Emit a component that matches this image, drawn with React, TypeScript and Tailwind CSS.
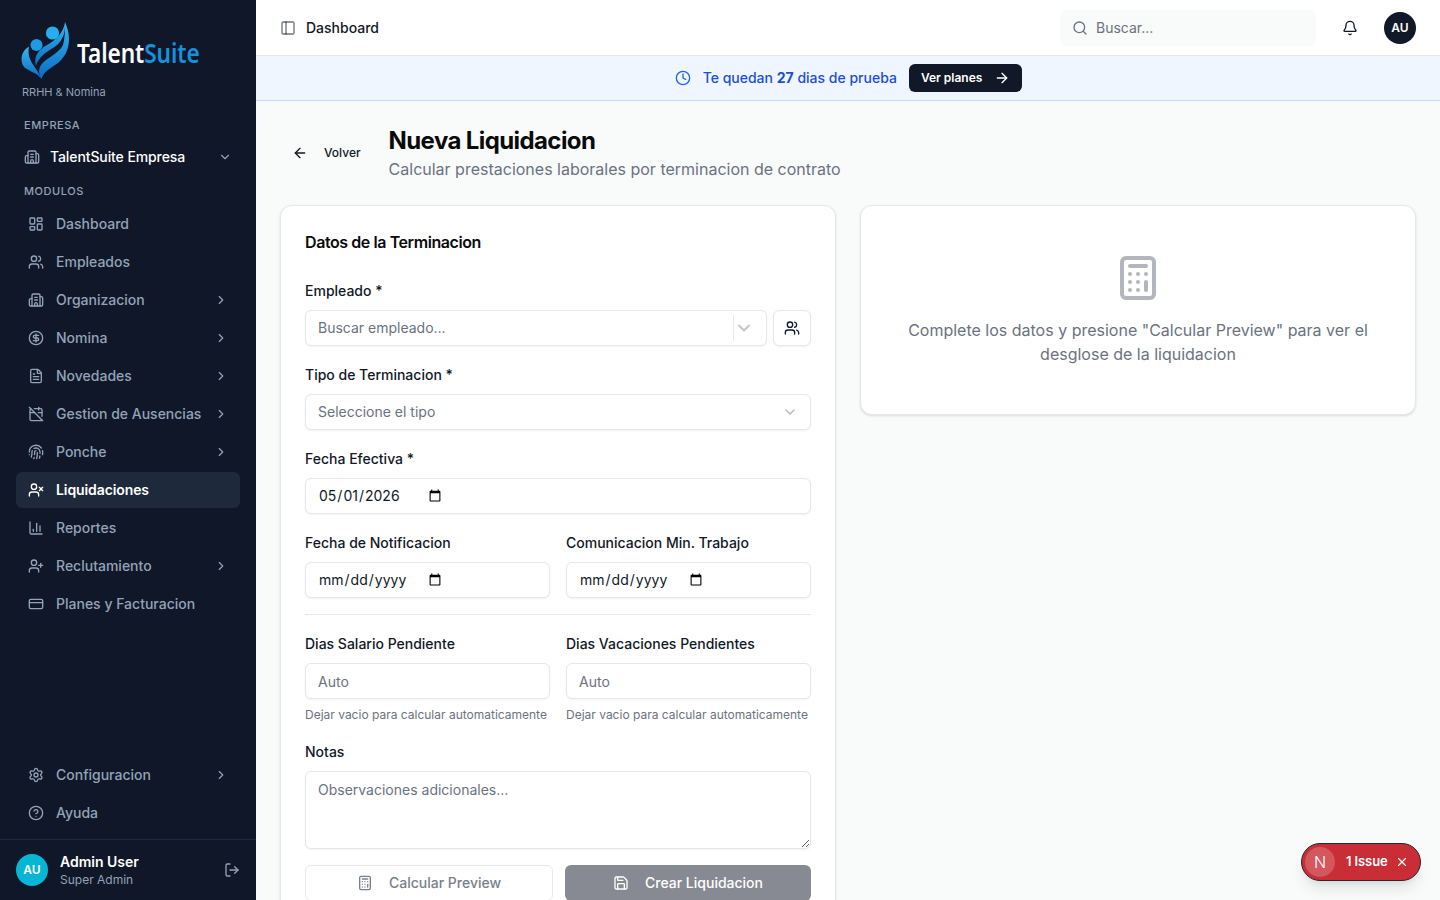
import React from "react";
import {
  Building2, ChevronDown, ChevronRight, LayoutDashboard, Users, CircleDollarSign, FileText, CalendarOff,
  Fingerprint, UserX, ChartColumn, UserPlus, CreditCard, Settings, CircleHelp, LogOut, PanelLeft, Clock,
  ArrowRight, ArrowLeft, Search, Bell, Calculator, Save, X,
} from "lucide-react";

const nav = [
  { label: "Dashboard", icon: LayoutDashboard },
  { label: "Empleados", icon: Users },
  { label: "Organizacion", icon: Building2, more: true },
  { label: "Nomina", icon: CircleDollarSign, more: true },
  { label: "Novedades", icon: FileText, more: true },
  { label: "Gestion de Ausencias", icon: CalendarOff, more: true },
  { label: "Ponche", icon: Fingerprint, more: true },
  { label: "Liquidaciones", icon: UserX, active: true },
  { label: "Reportes", icon: ChartColumn },
  { label: "Reclutamiento", icon: UserPlus, more: true },
  { label: "Planes y Facturacion", icon: CreditCard },
];

function NavItem({ label, icon: Icon, more, active }: { label: string; icon: any; more?: boolean; active?: boolean }) {
  return (
    <div className={`flex h-9 items-center rounded-md pl-3 pr-3 text-sm ${active ? "bg-[#1e293b] font-semibold tracking-[-0.1px] text-white" : "font-medium text-[#94a3b8]"}`}>
      <Icon className="mr-3 size-4 shrink-0" strokeWidth={2} />
      <span className="flex-1 whitespace-nowrap">{label}</span>
      {more && <ChevronRight className="size-[14px] shrink-0" />}
    </div>
  );
}

function Logo() {
  return (
    <svg viewBox="20 20 52 60" className="h-[60px] w-[52px] shrink-0">
      <defs>
        <linearGradient id="lg" x1="0" y1="0" x2="0" y2="1">
          <stop offset="0" stopColor="#38b6f1" />
          <stop offset="1" stopColor="#0a6cc2" />
        </linearGradient>
      </defs>
      <circle cx="52.5" cy="33" r="6.6" fill="#27aef0" />
      <circle cx="36.5" cy="45" r="6" fill="#1c9be6" />
      <path d="M65 22C64 32 56 40 47 45C40 49 33 55 36 66C38 58 46 52 53 48C60 44 66 36 65 22Z" fill="url(#lg)" />
      <path d="M65 22C72 38 70 53 58 63C51 68 44 71 41.500 79C37 72 39 65 46 60C53 55 60 51 63 45C65 38 65 30 65 22Z" fill="url(#lg)" />
      <path d="M29 46.500C21 51 19 62 25 68C31 72 37 73 41 78.500C38 70 33 66 30.500 60C28.500 55 28 51 29 46.500Z" fill="url(#lg)" />
    </svg>
  );
}

function Sidebar() {
  return (
    <aside className="flex h-full w-64 shrink-0 flex-col bg-[#0f1728]">
      <div className="pl-5 pt-5">
        <div className="flex h-[60px] items-center">
          <Logo />
          <span className="ml-[5px] mt-[6px] inline-block origin-left scale-x-[0.84] whitespace-nowrap font-['Noto_Sans',sans-serif] text-[27px] font-semibold tracking-[-0.1px] text-white">
            Talent<span className="text-[#1591dd]">Suite</span>
          </span>
        </div>
        <div className="mt-[4px] pl-[2px] text-[11px] leading-4 text-[#94a3b8]">RRHH &amp; Nomina</div>
      </div>
      <div className="mt-[17px] px-6 text-[11px] font-medium leading-4 tracking-[0.55px] text-[#94a3b8]">EMPRESA</div>
      <div className="mt-[6px] flex h-9 items-center pl-6 pr-6 text-sm font-medium tracking-[-0.1px] text-white">
        <Building2 className="mr-[10px] size-4 text-[#94a3b8]" />
        <span className="flex-1">TalentSuite Empresa</span>
        <ChevronDown className="size-[14px] text-[#94a3b8]" />
      </div>
      <div className="mt-[8px] px-6 text-[11px] font-medium leading-4 tracking-[0.55px] text-[#94a3b8]">MODULOS</div>
      <nav className="mt-[7px] flex flex-col gap-[2px] px-4">
        {nav.map((n) => (
          <NavItem key={n.label} {...n} />
        ))}
      </nav>
      <div className="mt-auto flex flex-col gap-[2px] px-4 pb-2">
        <NavItem label="Configuracion" icon={Settings} more />
        <NavItem label="Ayuda" icon={CircleHelp} />
      </div>
      <div className="flex h-[61px] items-center border-t border-[#1e293b] pl-4 pr-4">
        <div className="flex size-8 items-center justify-center rounded-full bg-[#06b6d4] text-xs font-semibold text-white">AU</div>
        <div className="ml-3 flex-1">
          <div className="text-sm font-semibold leading-[18px] text-white">Admin User</div>
          <div className="mt-[1px] text-xs leading-4 text-[#94a3b8]">Super Admin</div>
        </div>
        <LogOut className="size-4 text-[#94a3b8]" />
      </div>
    </aside>
  );
}

function Header() {
  return (
    <header className="flex h-14 shrink-0 items-center border-b border-[#e5e7eb] bg-white px-6">
      <PanelLeft className="size-4 text-[#111827]/60" />
      <span className="ml-[10px] flex-1 text-sm font-medium text-[#111827]">Dashboard</span>
      <div className="flex h-9 w-64 items-center rounded-md bg-[#f9fafa] pl-3 text-sm text-[#6b7280]">
        <Search className="mr-2 size-4" />
        <span>Buscar...</span>
      </div>
      <Bell className="ml-[26px] size-4 text-[#0f172a]" />
      <div className="ml-[26px] flex size-8 items-center justify-center rounded-full bg-[#111827] text-xs font-semibold text-white">AU</div>
    </header>
  );
}

function Banner() {
  return (
    <div className="flex h-[45px] shrink-0 items-center justify-center border-b border-[#bfdbfe] bg-[#eff6ff] pl-[1px]">
      <Clock className="mr-3 size-4 text-[#2563eb]" />
      <span className="text-sm font-medium text-[#1d4ed8]">
        Te quedan <b className="font-bold">27</b> dias de prueba
      </span>
      <div className="ml-3 flex h-7 items-center rounded-md bg-[#111827] px-3 text-xs font-semibold text-white">
        Ver planes
        <ArrowRight className="ml-3 size-4" />
      </div>
    </div>
  );
}

const inputCls =
  "flex h-9 w-full rounded-md border border-[#e5e7eb] bg-white px-3 text-sm text-[#111827] shadow-xs outline-none placeholder:text-[#6b7280]";

function Field({ label, children }: { label: string; children: React.ReactNode }) {
  return (
    <div>
      <label className="mb-[9px] block h-5 text-sm font-medium leading-5 text-[#111827]">{label}</label>
      {children}
    </div>
  );
}

function FormCard() {
  return (
    <section className="rounded-xl border border-[#e5e7eb] bg-white px-6 pb-6 pt-6 shadow-sm">
      <h2 className="text-base font-semibold leading-6 tracking-[-0.42px] text-[#0a0a0a]">Datos de la Terminacion</h2>
      <div className="mt-[27px] flex flex-col gap-[19px]">
        <Field label="Empleado *">
          <div className="flex gap-[6px]">
            <div className="flex h-9 flex-1 items-center rounded-md border border-[#e5e7eb] bg-white pl-3 pr-3 text-sm text-[#6b7280] shadow-xs">
              <span className="flex-1">Buscar empleado...</span>
              <span className="h-[26px] w-px bg-[#e5e7eb]" />
              <ChevronDown className="size-5 text-[#c4c7cc]" strokeWidth={2.5} />
            </div>
            <button className="flex h-9 w-[38px] items-center justify-center rounded-md border border-[#e5e7eb] bg-white shadow-xs">
              <Users className="size-4 text-[#111827]" />
            </button>
          </div>
        </Field>
        <Field label="Tipo de Terminacion *">
          <div className="flex h-9 items-center justify-between rounded-md border border-[#e5e7eb] bg-white px-3 text-sm text-[#6b7280] shadow-xs">
            <span>Seleccione el tipo</span>
            <ChevronDown className="size-4 text-[#6b7280]/50" />
          </div>
        </Field>
        <Field label="Fecha Efectiva *">
          <input type="date" defaultValue="2026-05-01" className={inputCls} />
        </Field>
        <div className="grid grid-cols-2 gap-4">
          <Field label="Fecha de Notificacion">
            <input type="date" className={inputCls} />
          </Field>
          <Field label="Comunicacion Min. Trabajo">
            <input type="date" className={inputCls} />
          </Field>
        </div>
        <div className="-mt-[3px] h-px bg-[#e5e7eb]" />
        <div className="grid grid-cols-2 gap-4">
          <Field label="Dias Salario Pendiente">
            <input placeholder="Auto" className={inputCls} />
            <p className="mt-2 whitespace-nowrap text-xs leading-4 text-[#6b7280]">Dejar vacio para calcular automaticamente</p>
          </Field>
          <Field label="Dias Vacaciones Pendientes">
            <input placeholder="Auto" className={inputCls} />
            <p className="mt-2 whitespace-nowrap text-xs leading-4 text-[#6b7280]">Dejar vacio para calcular automaticamente</p>
          </Field>
        </div>
        <Field label="Notas">
          <textarea
            placeholder="Observaciones adicionales..."
            className="block h-[78px] w-full rounded-md border border-[#e5e7eb] bg-white px-3 py-2 text-sm text-[#111827] shadow-xs outline-none placeholder:text-[#6b7280]"
          />
        </Field>
      </div>
      <div className="mt-4 flex gap-3">
        <button className="flex h-9 w-[248px] items-center justify-center rounded-md border border-[#e5e7eb] bg-white text-sm font-medium text-[#6b7280] opacity-90">
          <Calculator className="mr-4 size-4" />
          Calcular Preview
        </button>
        <button className="flex h-9 flex-1 items-center justify-center rounded-md bg-[#888a93] text-sm font-medium text-white">
          <Save className="mr-4 size-4" />
          Crear Liquidacion
        </button>
      </div>
    </section>
  );
}

function PreviewCard() {
  return (
    <section className="flex flex-col items-center self-start rounded-xl border border-[#e5e7eb] bg-white px-6 py-12 text-center shadow-sm">
      <Calculator className="size-12 text-[#b3b6be]" strokeWidth={2} />
      <p className="mt-4 text-base leading-6 text-[#6b7280]">
        Complete los datos y presione "Calcular Preview" para ver el desglose de la liquidacion
      </p>
    </section>
  );
}

export default function App() {
  return (
    <div className="relative flex h-screen overflow-hidden bg-[#f9fbfb] font-['Inter',sans-serif]">
      <Sidebar />
      <div className="flex min-w-0 flex-1 flex-col">
        <Header />
        <Banner />
        <main className="flex-1 overflow-hidden px-6 pt-6">
          <div className="flex items-center">
            <button className="flex h-8 items-center px-3 text-xs font-medium text-[#111827]">
              <ArrowLeft className="mr-4 size-4" />
              Volver
            </button>
            <div className="ml-4">
              <h1 className="text-2xl font-bold leading-8 tracking-[-0.6px] text-[#0a0a0a]">Nueva Liquidacion</h1>
              <p className="text-base leading-6 text-[#6b7280]">Calcular prestaciones laborales por terminacion de contrato</p>
            </div>
          </div>
          <div className="mt-6 grid grid-cols-2 gap-6">
            <FormCard />
            <PreviewCard />
          </div>
        </main>
      </div>
      <div className="absolute bottom-[19px] right-[19px] flex h-[38px] w-[120px] items-center rounded-full border border-[#1f2937] bg-[#c92d35] pl-[3px] pr-[11px] shadow-lg">
        <span className="flex size-[30px] items-center justify-center rounded-full bg-white/20 text-base font-light text-white">N</span>
        <span className="ml-[11px] flex-1 whitespace-nowrap text-[13px] font-semibold tracking-[-0.1px] text-white">1 Issue</span>
        <X className="size-[14px] text-white" />
      </div>
    </div>
  );
}
